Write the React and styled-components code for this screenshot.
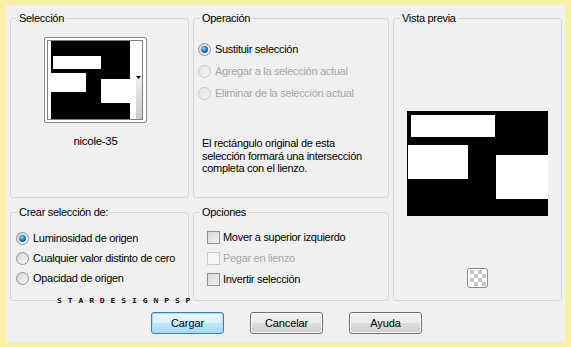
import React from "react";
import styled, { createGlobalStyle } from "styled-components";

const GlobalStyle = createGlobalStyle`
  html, body {
    margin: 0;
    padding: 0;
    background: #f7f0a6;
  }
  * {
    box-sizing: border-box;
  }
`;

const Frame = styled.div`
  width: 571px;
  height: 347px;
  padding: 5px 6px 5px 6px;
  background: #f7f0a6;
  font-family: "Liberation Sans", Arial, sans-serif;
  font-size: 11px;
  letter-spacing: -0.3px;
  color: #000;
`;

const Dialog = styled.div`
  position: relative;
  height: 100%;
  background: #f0f0f0;
  padding: 7px 3px 8px 4px;
  display: flex;
  flex-direction: column;
`;

const Panels = styled.div`
  display: grid;
  grid-template-columns: 179px 196px 169px;
  grid-template-rows: 186px 95px;
  column-gap: 4px;
  row-gap: 8px;
`;

const Group = styled.fieldset`
  margin: 0;
  padding: 0;
  min-width: 0;
  border: 1px solid #d0d8df;
  border-radius: 3px;
  grid-column: ${(p) => p.$col};
  grid-row: ${(p) => p.$row};
  display: flex;
  flex-direction: column;
`;

const Legend = styled.legend`
  margin-left: 6px;
  padding: 0 2px;
  line-height: 13px;
  height: 13px;
`;

const Body = styled.div`
  display: flex;
  flex-direction: column;
  align-items: ${(p) => p.$align || "flex-start"};
  gap: ${(p) => p.$gap || 0}px;
  padding: ${(p) => p.$pad};
`;

const Thumb = styled.div`
  margin-left: 33px;
  width: 103px;
  display: flex;
  flex-direction: column;
  align-items: center;
`;

const ThumbFrame = styled.div`
  width: 103px;
  height: 86px;
  border: 1px solid #8c8c8c;
  border-radius: 2px;
  background: #fff;
  display: flex;
`;

const ThumbName = styled.div`
  margin-top: 12px;
  line-height: 13px;
  font-size: 11.5px;
`;

const Option = styled.label`
  display: flex;
  align-items: center;
  gap: ${(p) => p.$gap || 4}px;
  height: 15px;
  line-height: 15px;
  white-space: nowrap;
  color: ${(p) => (p.$disabled ? "#a6a6a6" : "#000")};
`;

const Note = styled.p`
  margin: 36px 0 0 8px;
  line-height: 12.5px;
`;

const Buttons = styled.div`
  margin-top: 11px;
  display: flex;
  justify-content: center;
  gap: 26px;
  padding-left: 1px;
`;

const Button = styled.button`
  width: 73px;
  height: 22px;
  font-family: inherit;
  font-size: 11px;
  letter-spacing: -0.1px;
  color: #000;
  border-radius: 3px;
  border: 1px solid ${(p) => (p.$primary ? "#3c7fb1" : "#707070")};
  background: ${(p) =>
    p.$primary
      ? "linear-gradient(#eaf6fd 0%, #d9f0fc 48%, #bee6fd 52%, #a7d9f5 100%)"
      : "linear-gradient(#f2f2f2 0%, #ebebeb 48%, #dddddd 52%, #cfcfcf 100%)"};
  box-shadow: inset 0 0 0 1px ${(p) => (p.$primary ? "#9fe1fb" : "#fcfcfc")};
  padding: 0;
`;

const Watermark = styled.div`
  position: absolute;
  left: 51px;
  top: 293px;
  font-family: "DejaVu Sans Mono", monospace;
  font-weight: bold;
  font-size: 8px;
  line-height: 8px;
  letter-spacing: 5.9px;
  color: #111;
  transform: scaleY(0.85);
  transform-origin: left top;
`;

const Radio = ({ checked, disabled }) => (
  <svg width="13" height="13" viewBox="0 0 13 13" style={{ opacity: disabled ? 0.4 : 1 }}>
    <defs>
      <linearGradient id="radioFill" x1="0" y1="0" x2="1" y2="1">
        <stop offset="0" stopColor="#d2d2d2" />
        <stop offset="1" stopColor="#fbfbfb" />
      </linearGradient>
      <radialGradient id="radioDot" cx="0.4" cy="0.35" r="0.65">
        <stop offset="0" stopColor="#a8e6ff" />
        <stop offset="0.45" stopColor="#2d92da" />
        <stop offset="1" stopColor="#0c4c8c" />
      </radialGradient>
    </defs>
    <circle cx="6.5" cy="6.5" r="6" fill="url(#radioFill)" stroke="#8d9096" />
    {checked && <circle cx="6.5" cy="6.5" r="3.4" fill="url(#radioDot)" />}
  </svg>
);

const Check = ({ disabled }) => (
  <svg width="13" height="13" viewBox="0 0 13 13">
    <defs>
      <linearGradient id="checkFill" x1="0" y1="0" x2="1" y2="1">
        <stop offset="0" stopColor="#d0d0d0" />
        <stop offset="1" stopColor="#f8f8f8" />
      </linearGradient>
    </defs>
    <rect
      x="0.5"
      y="0.5"
      width="12"
      height="12"
      fill={disabled ? "#f6f6f6" : "url(#checkFill)"}
      stroke={disabled ? "#c9c9c9" : "#8e8f8f"}
    />
    {!disabled && <rect x="2.5" y="2.5" width="8" height="8" fill="none" stroke="#e4e4e4" />}
  </svg>
);

const ThumbArt = () => (
  <svg width="101" height="84" viewBox="0 0 101 84">
    <defs>
      <linearGradient id="strip" x1="0" y1="0" x2="0" y2="1">
        <stop offset="0" stopColor="#eeeeee" />
        <stop offset="1" stopColor="#c9c9c9" />
      </linearGradient>
    </defs>
    <rect x="2.5" y="2.5" width="95" height="79" fill="none" stroke="#000" strokeDasharray="1 1" />
    <rect x="6" y="3" width="79" height="78" fill="#000" />
    <rect x="8" y="18" width="48" height="13" fill="#fff" />
    <rect x="6" y="35" width="35" height="19" fill="#fff" />
    <rect x="56" y="41" width="29" height="24" fill="#fff" />
    <rect x="91" y="40" width="6" height="41" fill="url(#strip)" />
    <polygon points="91,38 96,38 93.5,41" fill="#000" />
  </svg>
);

const PreviewArt = () => (
  <svg width="141" height="105" viewBox="0 0 141 105">
    <rect width="141" height="105" fill="#000" />
    <rect x="4" y="4" width="84" height="22" fill="#fff" />
    <rect x="1" y="34" width="60" height="34" fill="#fff" />
    <rect x="89" y="44" width="52" height="44" fill="#fff" />
  </svg>
);

const CheckerIcon = () => (
  <svg width="21" height="20" viewBox="0 0 21 20" style={{ marginTop: 52 }}>
    <rect x="0.5" y="0.5" width="20" height="19" rx="2.5" fill="#fff" stroke="#8a8a8a" />
    {[0, 1, 2, 3].map((r) =>
      [0, 1, 2, 3].map((c) =>
        (r + c) % 2 === 0 ? (
          <rect key={`${r}-${c}`} x={3 + c * 4} y={2 + r * 4} width="4" height="4" fill="#c6c6c6" />
        ) : null
      )
    )}
  </svg>
);

export default function App() {
  return (
    <>
      <GlobalStyle />
      <Frame>
        <Dialog>
          <Panels>
            <Group $col="1" $row="1">
              <Legend>Selección</Legend>
              <Body $pad="12px 0 0 0">
                <Thumb>
                  <ThumbFrame>
                    <ThumbArt />
                  </ThumbFrame>
                  <ThumbName>nicole-35</ThumbName>
                </Thumb>
              </Body>
            </Group>

            <Group $col="2" $row="1">
              <Legend>Operación</Legend>
              <Body $pad="17px 0 0 4px" $gap={7}>
                <Option>
                  <Radio checked />
                  Sustituir selección
                </Option>
                <Option $disabled>
                  <Radio disabled />
                  Agregar a la selección actual
                </Option>
                <Option $disabled>
                  <Radio disabled />
                  Eliminar de la selección actual
                </Option>
              </Body>
              <Note>
                El rectángulo original de esta
                <br />
                selección formará una intersección
                <br />
                completa con el lienzo.
              </Note>
            </Group>

            <Group $col="3" $row="1 / span 2">
              <Legend>Vista previa</Legend>
              <Body $pad="86px 0 0 0" $align="center">
                <PreviewArt />
                <CheckerIcon />
              </Body>
            </Group>

            <Group $col="1" $row="2">
              <Legend>Crear selección de:</Legend>
              <Body $pad="12px 0 0 5px" $gap={5}>
                <Option>
                  <Radio checked />
                  Luminosidad de origen
                </Option>
                <Option>
                  <Radio />
                  Cualquier valor distinto de cero
                </Option>
                <Option>
                  <Radio />
                  Opacidad de origen
                </Option>
              </Body>
            </Group>

            <Group $col="2" $row="2">
              <Legend>Opciones</Legend>
              <Body $pad="11px 0 0 13px" $gap={6}>
                <Option $gap={3}>
                  <Check />
                  Mover a superior izquierdo
                </Option>
                <Option $gap={3} $disabled>
                  <Check disabled />
                  Pegar en lienzo
                </Option>
                <Option $gap={3}>
                  <Check />
                  Invertir selección
                </Option>
              </Body>
            </Group>
          </Panels>

          <Buttons>
            <Button $primary>Cargar</Button>
            <Button>Cancelar</Button>
            <Button>Ayuda</Button>
          </Buttons>

          <Watermark>STARDESIGNPSP</Watermark>
        </Dialog>
      </Frame>
    </>
  );
}
